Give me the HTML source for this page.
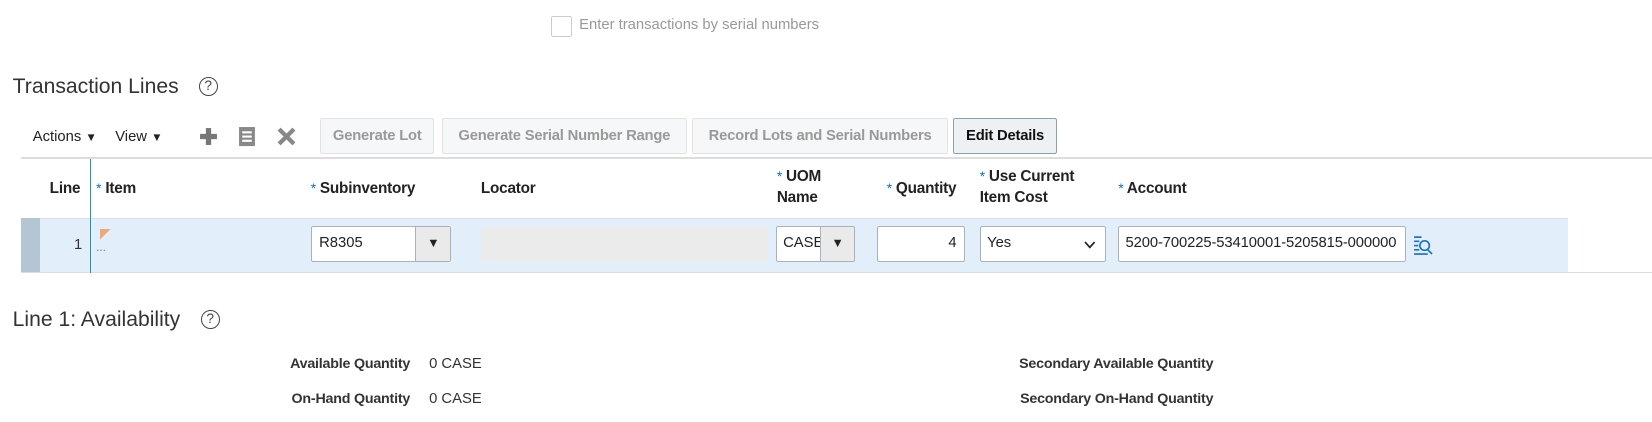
<!DOCTYPE html>
<html><head><style>
html,body{margin:0;padding:0;background:#fff;overflow:hidden}
body{width:1652px;height:422px}
#w{zoom:1.0569;position:relative;width:1563px;height:399px;font-family:"Liberation Sans",Arial,sans-serif;color:#333}
.a{position:absolute;white-space:nowrap}
.h{font-size:20px;color:#333}
.q{width:16px;height:16px;border:1.5px solid #444;border-radius:50%;font-size:13px;text-align:center;line-height:16px;color:#444}
.tb{font-size:14px;color:#222}
.btn{position:absolute;top:112px;height:32px;border:1px solid #dfe3e6;background:#f6f7f8;color:#999;font-weight:bold;font-size:14px;line-height:34px;text-align:center;border-radius:2px;letter-spacing:-0.2px}
.th{font-size:14.5px;font-weight:bold;color:#222;line-height:20px;letter-spacing:-0.2px}
.st{color:#0572ce;font-weight:normal;font-size:13px;vertical-align:top}
.inp{position:absolute;top:214px;height:34px;border:1px solid #a9b2ba;background:#fff;box-sizing:border-box;font-size:14px;line-height:32px;color:#222;border-radius:2px}
.arr{position:absolute;right:0;top:0;height:32px;background:#eaeaea;border-left:1px solid #a9b2ba;text-align:center;font-size:12px}
.lbl{font-size:13.5px;font-weight:bold;color:#333;letter-spacing:-0.2px}
</style></head><body><div id="w">
<div class="a" style="left:521px;top:15px;width:18px;height:18px;border:1px solid #ccc;border-radius:2px"></div>
<div class="a" style="left:548px;top:16px;font-size:14px;color:#999">Enter transactions by serial numbers</div>

<div class="a h" style="left:12px;top:71px">Transaction Lines</div>
<div class="a q" style="left:188px;top:73px">?</div>

<div class="a tb" style="left:31px;top:122px">Actions <span style="font-size:11px">▼</span></div>
<div class="a tb" style="left:109px;top:122px">View <span style="font-size:11px">▼</span></div>
<svg class="a" style="left:188px;top:120px" width="18" height="18"><rect x="6.5" y="1" width="5" height="16" fill="#777"/><rect x="1" y="6.5" width="16" height="5" fill="#777"/></svg>
<svg class="a" style="left:225px;top:119px" width="17" height="20"><rect x="1" y="1" width="15" height="18" fill="#888"/><rect x="4" y="5" width="9" height="2" fill="#fff"/><rect x="4" y="9" width="9" height="2" fill="#fff"/><rect x="4" y="13" width="9" height="2" fill="#fff"/></svg>
<svg class="a" style="left:262px;top:120px" width="18" height="18"><path d="M2 2L16 16M16 2L2 16" stroke="#888" stroke-width="4"/></svg>

<div class="btn" style="left:303px;width:106px">Generate Lot</div>
<div class="btn" style="left:418px;width:230px">Generate Serial Number Range</div>
<div class="btn" style="left:655px;width:240px">Record Lots and Serial Numbers</div>
<div class="btn" style="left:902px;width:96px;background:#eef1f3;border-color:#8aa0b0;color:#111">Edit Details</div>

<div class="a" style="left:20px;top:149px;width:1543px;height:1px;background:#ddd"></div>
<div class="a" style="left:20px;top:206px;width:1464px;height:51px;background:#e3eefb;border-top:1px solid #d6e2ee"></div>
<div class="a" style="left:20px;top:206px;width:18px;height:51px;background:#b4c5d6"></div>
<div class="a" style="left:20px;top:257px;width:1543px;height:1px;background:#ddd"></div>
<div class="a" style="left:85px;top:150px;width:1px;height:108px;background:#1b9aa6"></div>

<div class="a th" style="left:47px;top:168px">Line</div>
<div class="a th" style="left:91px;top:168px"><span class="st">*</span> Item</div>
<div class="a th" style="left:294px;top:168px"><span class="st">*</span> Subinventory</div>
<div class="a th" style="left:455px;top:168px">Locator</div>
<div class="a th" style="left:735px;top:157px"><span class="st">*</span> UOM<br>Name</div>
<div class="a th" style="left:839px;top:168px"><span class="st">*</span> Quantity</div>
<div class="a th" style="left:927px;top:157px"><span class="st">*</span> Use Current<br>Item Cost</div>
<div class="a th" style="left:1058px;top:168px"><span class="st">*</span> Account</div>

<div class="a" style="left:70px;top:224px;font-size:14px;color:#333">1</div>
<svg class="a" style="left:95px;top:217px" width="10" height="10"><path d="M0 0H10L0 10Z" fill="#f0a878"/></svg>
<div class="a" style="left:91px;top:228px;font-size:11px;color:#777">...</div>

<div class="inp" style="left:294px;width:133px;padding-left:7px">R8305<div class="arr" style="width:32px">▼</div></div>
<div class="a" style="left:455px;top:215px;width:272px;height:33px;background:#ebebeb"></div>
<div class="inp" style="left:734px;width:75px;padding-left:6px;overflow:hidden">CASE<div class="arr" style="width:31px">▼</div></div>
<div class="inp" style="left:830px;width:83px;text-align:right;padding-right:7px">4</div>
<div class="inp" style="left:927px;width:119px;padding-left:6px">Yes<svg style="position:absolute;right:8px;top:13px" width="11" height="8"><path d="M1 1L5.5 6L10 1" stroke="#222" stroke-width="1.6" fill="none"/></svg></div>
<div class="inp" style="left:1058px;width:272px;padding-left:6px;overflow:hidden;font-size:14px;letter-spacing:-0.1px">5200-700225-53410001-5205815-000000</div>
<svg class="a" style="left:1337px;top:222px" width="20" height="20"><g stroke="#1a73c8" stroke-width="1.6" fill="none"><path d="M1 2H8M1 6H6M1 10H5M1 14H6"/><circle cx="11" cy="10" r="4.5"/><path d="M14 14L18 18"/><path d="M1 18H14"/></g></svg>

<div class="a h" style="left:12px;top:291px">Line 1: Availability</div>
<div class="a q" style="left:190px;top:293px">?</div>

<div class="a lbl" style="right:1175px;top:337px">Available Quantity</div>
<div class="a" style="left:406px;top:337px;font-size:14px">0 CASE</div>
<div class="a lbl" style="right:1175px;top:370px">On-Hand Quantity</div>
<div class="a" style="left:406px;top:370px;font-size:14px">0 CASE</div>
<div class="a lbl" style="right:415px;top:337px">Secondary Available Quantity</div>
<div class="a lbl" style="right:415px;top:370px">Secondary On-Hand Quantity</div>
</div></body></html>
